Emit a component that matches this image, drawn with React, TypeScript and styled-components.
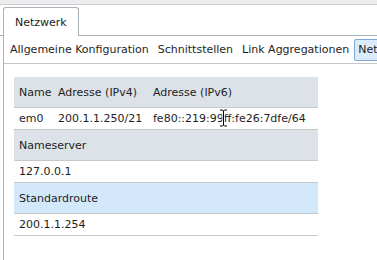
import React from "react"
import styled, { createGlobalStyle } from "styled-components"

const GlobalStyle = createGlobalStyle`
  html, body {
    margin: 0;
    padding: 0;
    background: #fff;
    font-family: "DejaVu Sans", Verdana, sans-serif;
    font-size: 11px;
    color: #1e1e1e;
  }
`

const Page = styled.div`
  position: relative;
  width: 377px;
  height: 260px;
  overflow: hidden;
  background: #fff;
`

const TopStrip = styled.div`
  height: 4px;
  background: #ececec;
  border-bottom: 1px solid #c9ccd0;
`

const TabBar = styled.div`
  display: flex;
  align-items: flex-end;
  height: 30px;
  padding-left: 3px;
  border-bottom: 1px solid #a9b1b9;
`

const Tab = styled.div`
  display: flex;
  align-items: center;
  height: 28px;
  margin-bottom: -1px;
  padding: 0 11px 0 11px;
  width: 52px;
  background: #fff;
  border: 1px solid #a9b1b9;
  border-bottom: none;
  border-radius: 3px 3px 0 0;
  font-size: 11px;
  color: #222;
`

const Panel = styled.div`
  margin-left: 3px;
  border-left: 1px solid #a9b1b9;
  height: 230px;
`

const SubTabs = styled.div`
  display: flex;
  align-items: center;
  height: 27px;
  padding-left: 2px;
  border-bottom: 1px solid #c4c8cc;
  white-space: nowrap;
`

const SubTab = styled.div<{ active?: boolean }>`
  flex: none;
  height: 20px;
  line-height: 20px;
  padding: 0 3px;
  margin-right: 1px;
  border: 1px solid ${p => (p.active ? "#7fa6d4" : "transparent")};
  border-radius: 2px;
  background: ${p => (p.active ? "#dcebfc" : "transparent")};
`

const Content = styled.div`
  padding: 13px 0 0 10px;
`

const Table = styled.div`
  width: 304px;
`

const Row = styled.div<{ tone?: "head" | "blue" | "plain"; tall?: boolean }>`
  display: flex;
  align-items: center;
  height: ${p => (p.tall ? 30 : 21)}px;
  padding-left: 5px;
  border-bottom: 1px solid #c8c8c8;
  background: ${p =>
    p.tone === "head" ? "#dce2e8" : p.tone === "blue" ? "#d4e8fc" : "#fff"};
  white-space: nowrap;
`

const Cell = styled.div<{ w?: number }>`
  flex: none;
  width: ${p => (p.w ? `${p.w}px` : "auto")};
`

const Cursor = styled.svg`
  position: absolute;
  left: 219px;
  top: 109px;
`

export default function App() {
  return (
    <Page>
      <GlobalStyle />
      <TopStrip />
      <TabBar>
        <Tab>Netzwerk</Tab>
      </TabBar>
      <Panel>
        <SubTabs>
          <SubTab>Allgemeine Konfiguration</SubTab>
          <SubTab>Schnittstellen</SubTab>
          <SubTab>Link Aggregationen</SubTab>
          <SubTab active>Netzwerk</SubTab>
        </SubTabs>
        <Content>
          <Table>
            <Row tone="head" tall>
              <Cell w={39}>Name</Cell>
              <Cell w={95}>Adresse (IPv4)</Cell>
              <Cell>Adresse (IPv6)</Cell>
            </Row>
            <Row>
              <Cell w={39}>em0</Cell>
              <Cell w={95}>200.1.1.250/21</Cell>
              <Cell>fe80::219:99ff:fe26:7dfe/64</Cell>
            </Row>
            <Row tone="head" tall>Nameserver</Row>
            <Row>127.0.0.1</Row>
            <Row tone="blue" tall>Standardroute</Row>
            <Row>200.1.1.254</Row>
          </Table>
        </Content>
      </Panel>
      <Cursor width="9" height="18" viewBox="0 0 9 18">
        <path d="M1 1h2.5l1 1 1-1H8M4.5 2v14M1 17h2.5l1-1 1 1H8" fill="none" stroke="#fff" strokeWidth="2.4" />
        <path d="M1 1h2.5l1 1 1-1H8M4.5 2v14M1 17h2.5l1-1 1 1H8" fill="none" stroke="#000" strokeWidth="1" />
      </Cursor>
    </Page>
  )
}
